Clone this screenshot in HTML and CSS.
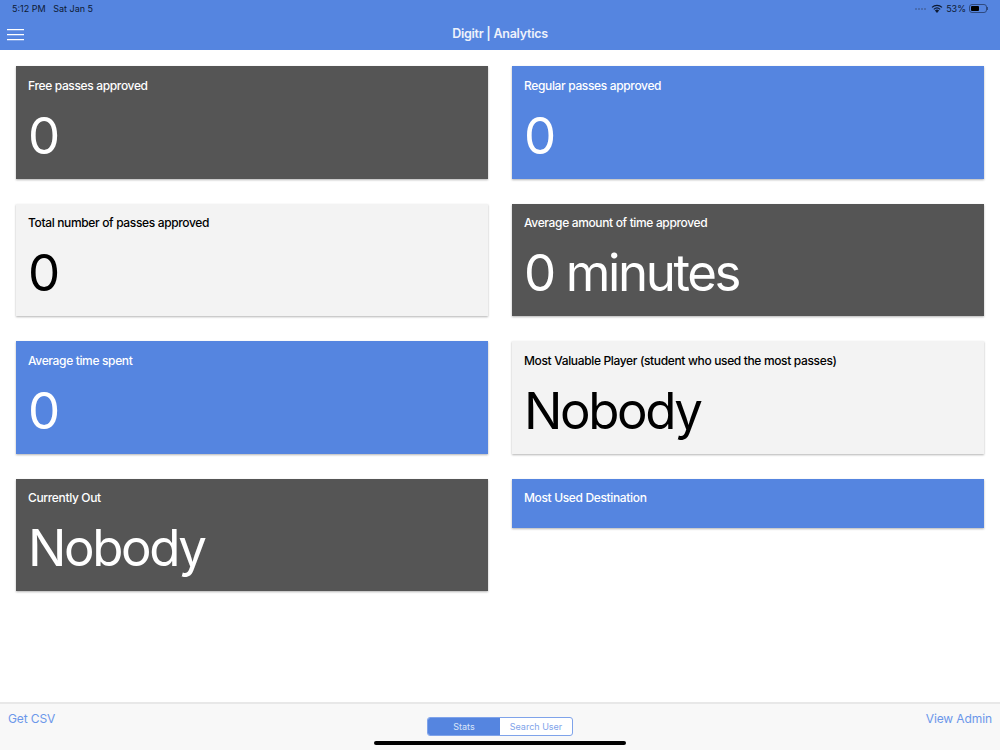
FILE: index.html
```html
<!DOCTYPE html>
<html lang="en">
<head>
<meta charset="utf-8">
<title>Digitr | Analytics</title>
<link rel="stylesheet" href="styles.css">
</head>
<body>
<div class="app">
  <header class="header">
    <div class="status">
      <span class="status-time">5:12 PM&nbsp;&nbsp;&nbsp;Sat Jan 5</span>
      <span class="status-right">
        <span class="signal"><i></i><i></i><i></i><i></i></span>
        <svg class="wifi" width="12" height="9" viewBox="0 0 12 9"><path d="M6 9 L3.9 6.6 A3 3 0 0 1 8.1 6.6 Z" fill="#0d1a33"/><path d="M2.8 5.4 A4.8 4.8 0 0 1 9.2 5.4" fill="none" stroke="#0d1a33" stroke-width="1.2"/><path d="M1 3.4 A7.4 7.4 0 0 1 11 3.4" fill="none" stroke="#0d1a33" stroke-width="1.2"/></svg>
        <span class="pct">53%</span>
        <span class="battery"><span class="battery-fill"></span></span><span class="battery-tip"></span>
      </span>
    </div>
    <div class="navbar">
      <button class="menu" aria-label="Menu"><span></span><span></span><span></span></button>
      <div class="title">Digitr | Analytics</div>
    </div>
  </header>
  <main class="grid">
    <section class="card dark"><h2 class="label">Free passes approved</h2><div class="value">0</div></section>
    <section class="card blue"><h2 class="label">Regular passes approved</h2><div class="value">0</div></section>
    <section class="card light"><h2 class="label">Total number of passes approved</h2><div class="value">0</div></section>
    <section class="card dark"><h2 class="label">Average amount of time approved</h2><div class="value">0 minutes</div></section>
    <section class="card blue"><h2 class="label">Average time spent</h2><div class="value">0</div></section>
    <section class="card light"><h2 class="label">Most Valuable Player (student who used the most passes)</h2><div class="value">Nobody</div></section>
    <section class="card dark"><h2 class="label">Currently Out</h2><div class="value">Nobody</div></section>
    <section class="card blue short"><h2 class="label">Most Used Destination</h2></section>
  </main>
  <footer class="footer">
    <a class="link">Get CSV</a>
    <div class="segment"><span class="seg active">Stats</span><span class="seg">Search User</span></div>
    <a class="link">View Admin</a>
    <div class="home"></div>
  </footer>
</div>
</body>
</html>
```
FILE: styles.css
```css
* { box-sizing: border-box; }
html, body { margin: 0; height: 100%; }
body { font-family: "Inter", "Liberation Sans", sans-serif; background: #fff; overflow: hidden; }
.app { width: 1000px; height: 750px; display: flex; flex-direction: column; }
.header { height: 50px; background: #5585e0; flex: none; }
.status { height: 17px; display: flex; justify-content: space-between; align-items: center; padding: 0 12px 0 12px; font-size: 9px; color: #0d1a33; }
.status-right { display: flex; align-items: center; gap: 3px; }
.signal { display: flex; gap: 1px; margin-right: 2px; align-self: flex-end; padding-bottom: 4px; }
.signal i { width: 2px; height: 2px; border-radius: 1px; background: #4565a3; }
.battery { width: 18px; height: 9px; border: 1px solid #2f4a80; border-radius: 3px; padding: 1px; display: block; }
.battery-fill { display: block; width: 8px; height: 100%; background: #000; border-radius: 1px; }
.battery-tip { width: 1px; height: 3px; background: #2f4a80; margin-left: -3px; }
.navbar { height: 33px; display: flex; align-items: center; position: relative; padding-left: 7px; }
.menu { width: 17px; height: 11px; margin-top: 1px; padding: 0; border: 0; background: none; display: flex; flex-direction: column; justify-content: space-between; }
.menu span { display: block; height: 1px; background: #fff; box-shadow: 0 0.5px 0 rgba(255,255,255,.5); }
.title { position: absolute; left: 0; right: 0; text-align: center; color: #eef2fb; font-size: 12.5px; font-weight: 600; letter-spacing: -0.25px; }
.grid { flex: 1; display: grid; grid-template-columns: 472px 472px; column-gap: 24px; row-gap: 25px; padding: 16.25px 16px 0; align-content: start; align-items: start; }
.card { height: 112.5px; padding: 11.5px 12px; box-shadow: 0 1px 2px rgba(0,0,0,.3); }
.card.short { height: 49.5px; }
.dark { background: #555; color: #fff; }
.blue { background: #5585e0; color: #fff; }
.light { background: #f3f3f3; color: #000; }
.label { margin: 0; font-size: 12px; line-height: 16px; font-weight: 500; letter-spacing: -0.35px; }
.value { font-size: 51px; line-height: 66px; margin-top: 9px; font-weight: 400; letter-spacing: -2.4px; }
.footer { height: 48px; flex: none; background: #f8f8f8; border-top: 2px solid #e8e8e8; position: relative; display: flex; justify-content: space-between; padding: 7px 8px 0; }
.link { color: #6b97ea; font-size: 12px; line-height: 16px; letter-spacing: -0.1px; }
.segment { position: absolute; left: 427px; top: 13px; width: 146px; height: 19px; border: 1px solid #7fa3ea; border-radius: 3px; display: flex; overflow: hidden; background: #fff; }
.seg { flex: 1; text-align: center; font-size: 9px; line-height: 18px; color: #7fa3ea; }
.seg.active { background: #5585e0; color: #dbe5f9; }
.home { position: absolute; left: 374px; top: 37px; width: 252px; height: 4px; background: #000; border-radius: 2px; }
```
